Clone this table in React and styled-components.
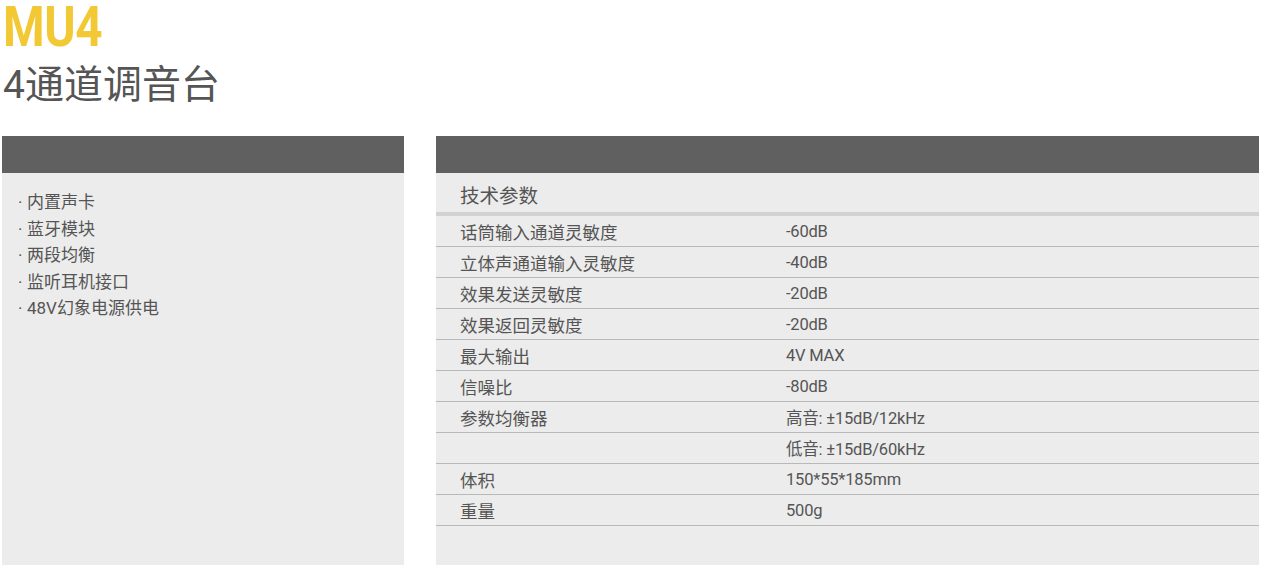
import React from "react";
import styled, { createGlobalStyle } from "styled-components";

const GlobalStyle = createGlobalStyle`
  html, body {
    margin: 0;
    padding: 0;
    background: #ffffff;
  }
  body {
    font-family: Roboto, "Noto Sans CJK SC", sans-serif;
    color: #555;
  }
`;

const Page = styled.div`
  width: 1262px;
  height: 565px;
  overflow: hidden;
  box-sizing: border-box;
  padding: 0 3px 0 2px;
`;

const Title = styled.h1`
  margin: 0;
  padding: 0 0 0 1px;
  height: 58px;
  font-family: "Roboto", sans-serif;
  font-weight: 700;
  font-size: 56px;
  line-height: 54px;
  color: #f2c935;
  letter-spacing: -0.5px;
`;

/* the logo type is a condensed face; squeeze Roboto to match */
const Condensed = styled.span`
  display: inline-block;
  transform: scaleX(0.85);
  transform-origin: left center;
`;

const Subtitle = styled.h2`
  margin: 0;
  padding: 0 0 0 1px;
  height: 78px;
  font-family: Roboto, "Noto Sans CJK SC", sans-serif;
  font-weight: 400;
  font-size: 39px;
  line-height: 55px;
  color: #555;
`;

const Columns = styled.div`
  display: grid;
  grid-template-columns: 402px 1fr;
  gap: 32px;
  height: 429px;
`;

const Panel = styled.section`
  display: flex;
  flex-direction: column;
  background: #ececec;
`;

const PanelHead = styled.div`
  height: 37px;
  background: #5f605f;
  flex: none;
`;

const FeatureList = styled.ul`
  list-style: none;
  margin: 0;
  padding: 16px 0 0 16px;
`;

const Feature = styled.li`
  font-size: 17px;
  line-height: 26.5px;
  color: #555;
  &::before {
    content: "·";
    display: inline-block;
    width: 9px;
  }
`;

const SpecHeading = styled.div`
  height: 43px;
  flex: none;
  box-sizing: border-box;
  padding: 11px 0 0 24px;
  font-size: 19.5px;
  line-height: 26px;
  color: #555;
  border-bottom: 4px solid #d2d2d2;
`;

const SpecRow = styled.div`
  display: grid;
  grid-template-columns: 326px 1fr;
  height: 31px;
  flex: none;
  box-sizing: border-box;
  padding: 0 0 0 24px;
  align-items: center;
  border-bottom: 1px solid #b9b9b9;
  font-size: 17.5px;
  color: #555;
`;

const Value = styled.span`
  font-size: 16.5px;
  letter-spacing: -0.2px;
`;

const features = ["内置声卡", "蓝牙模块", "两段均衡", "监听耳机接口", "48V幻象电源供电"];

const specs = [
  ["话筒输入通道灵敏度", "-60dB"],
  ["立体声通道输入灵敏度", "-40dB"],
  ["效果发送灵敏度", "-20dB"],
  ["效果返回灵敏度", "-20dB"],
  ["最大输出", "4V MAX"],
  ["信噪比", "-80dB"],
  ["参数均衡器", "高音: ±15dB/12kHz"],
  ["", "低音: ±15dB/60kHz"],
  ["体积", "150*55*185mm"],
  ["重量", "500g"],
];

export default function App() {
  return (
    <Page>
      <GlobalStyle />
      <Title>
        <Condensed>MU4</Condensed>
      </Title>
      <Subtitle>4通道调音台</Subtitle>
      <Columns>
        <Panel>
          <PanelHead />
          <FeatureList>
            {features.map((f) => (
              <Feature key={f}>{f}</Feature>
            ))}
          </FeatureList>
        </Panel>
        <Panel>
          <PanelHead />
          <SpecHeading>技术参数</SpecHeading>
          {specs.map(([label, value], i) => (
            <SpecRow key={i}>
              <span>{label}</span>
              <Value>{value}</Value>
            </SpecRow>
          ))}
        </Panel>
      </Columns>
    </Page>
  );
}
